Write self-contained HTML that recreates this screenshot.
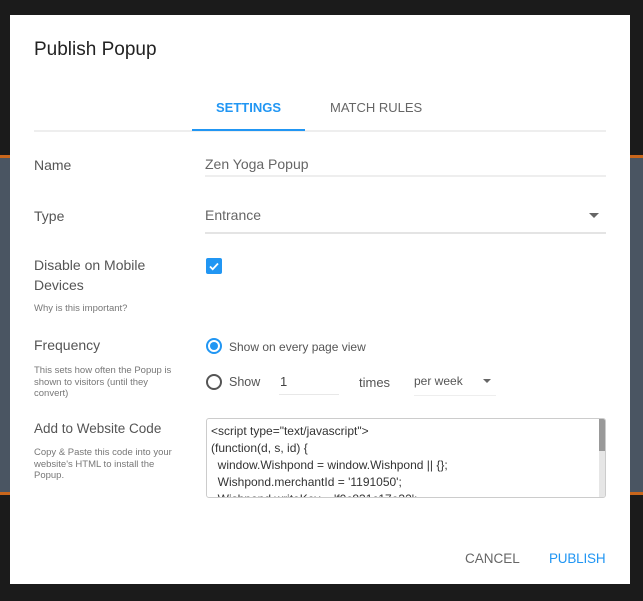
<!DOCTYPE html>
<html><head><style>
*{margin:0;padding:0;box-sizing:border-box}
body{width:643px;height:601px;background:#1b1b1b;position:relative;overflow:hidden;font-family:"Liberation Sans",sans-serif}
.bg{position:absolute;left:0;right:0;top:155px;height:340px;background:#4a5562;border-top:3px solid #c8661c;border-bottom:3px solid #c8661c}
.dlg{position:absolute;left:10px;top:15px;width:620px;height:569px;background:#fff}
.a{position:absolute;white-space:nowrap}
.lbl{font-size:14px;color:#555}
.sm{font-size:9.5px;color:#777;line-height:11.5px}
.line{position:absolute;height:1px;background:#ddd}
</style></head><body>
<div class="bg"></div>
<div class="dlg">
<div class="a" style="left:24px;top:24px;font-size:19px;color:#222">Publish Popup</div>
<div class="a" style="left:206px;top:85px;font-size:13px;font-weight:bold;color:#2196f3">SETTINGS</div>
<div class="a" style="left:320px;top:85px;font-size:13px;color:#666">MATCH RULES</div>
<div class="line" style="left:24px;top:115px;width:572px;height:2px;background:#eee"></div>
<div class="line" style="left:182px;top:114px;width:113px;height:2px;background:#2196f3"></div>

<div class="a lbl" style="left:24px;top:142px">Name</div>
<div class="a" style="left:195px;top:141px;font-size:14px;color:#666">Zen Yoga Popup</div>
<div class="line" style="left:195px;top:160px;width:401px;height:2px;background:#eee"></div>

<div class="a lbl" style="left:24px;top:193px">Type</div>
<div class="a" style="left:195px;top:192px;font-size:14px;color:#666">Entrance</div>
<div class="a" style="left:579px;top:198px;width:0;height:0;border-left:5px solid transparent;border-right:5px solid transparent;border-top:5px solid #666"></div>
<div class="line" style="left:195px;top:217px;width:401px;height:2px;background:#e4e4e4"></div>

<div class="a lbl" style="left:24px;top:240px;line-height:20px;white-space:normal;width:140px">Disable on Mobile Devices</div>
<div class="a sm" style="left:24px;top:288px">Why is this important?</div>
<div class="a" style="left:196px;top:243px;width:16px;height:16px;background:#2196f3;border-radius:2px"><svg width="16" height="16"><path d="M4 8.5l2.7 2.7L12 5.5" stroke="#fff" stroke-width="1.8" fill="none"/></svg></div>

<div class="a lbl" style="left:24px;top:322px">Frequency</div>
<div class="a sm" style="left:24px;top:350px;white-space:normal;width:150px">This sets how often the Popup is shown to visitors (until they convert)</div>
<div class="a" style="left:196px;top:323px;width:16px;height:16px;border:2px solid #2196f3;border-radius:50%"><div style="margin:2px;width:8px;height:8px;border-radius:50%;background:#2196f3"></div></div>
<div class="a" style="left:219px;top:325px;font-size:12px;color:#555">Show on every page view</div>
<div class="a" style="left:196px;top:359px;width:16px;height:16px;border:2px solid #555;border-radius:50%"></div>
<div class="a" style="left:219px;top:360px;font-size:12.5px;color:#555">Show</div>
<div class="a" style="left:270px;top:359px;font-size:13px;color:#444">1</div>
<div class="line" style="left:269px;top:379px;width:60px;background:#e8e8e8"></div>
<div class="a" style="left:349px;top:360px;font-size:13px;color:#555">times</div>
<div class="a" style="left:404px;top:359px;font-size:12px;color:#555">per week</div>
<div class="a" style="left:473px;top:364px;width:0;height:0;border-left:4px solid transparent;border-right:4px solid transparent;border-top:4px solid #666"></div>
<div class="line" style="left:404px;top:380px;width:82px;background:#eee"></div>

<div class="a" style="left:24px;top:406px;font-size:13.5px;color:#555">Add to Website Code</div>
<div class="a sm" style="left:24px;top:432px;white-space:normal;width:150px;line-height:11.5px">Copy &amp; Paste this code into your website's HTML to install the Popup.</div>
<div class="a" style="left:196px;top:403px;width:400px;height:80px;border:1px solid #ccc;border-radius:3px;overflow:hidden;font-size:12px;color:#333;line-height:17px;padding:4px 0 0 4px;white-space:pre">&lt;script type="text/javascript"&gt;
(function(d, s, id) {
  window.Wishpond = window.Wishpond || {};
  Wishpond.merchantId = '1191050';
  Wishpond.writeKey = 'f0c831c17e32';
  var js, ws = d.getElementsByTagName(s)[0];
<div style="position:absolute;right:0;top:0;width:6px;height:78px;background:#e6e6e6"><div style="height:32px;background:#999"></div></div></div>

<div class="a" style="left:455px;top:536px;font-size:13.5px;color:#666">CANCEL</div>
<div class="a" style="left:539px;top:536px;font-size:13.5px;color:#2196f3;letter-spacing:-0.2px">PUBLISH</div>
</div>
</body></html>
